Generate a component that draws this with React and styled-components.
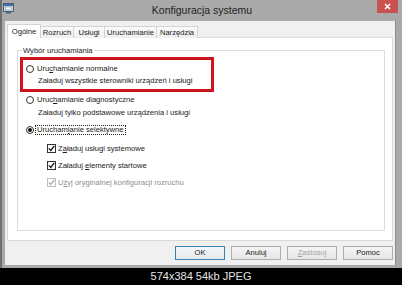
import React from "react";
import styled, { createGlobalStyle } from "styled-components";

const UI = "'Liberation Sans', Arial, sans-serif";

const Global = createGlobalStyle`
  html, body { margin: 0; padding: 0; background: #000; }
  body { font-family: ${UI}; }
  * { box-sizing: border-box; }
`;

const Page = styled.div`
  width: 402px;
  height: 285px;
  display: flex;
  flex-direction: column;
  background: #000;
  overflow: hidden;
`;

const Window = styled.div`
  height: 268px;
  flex: none;
  display: flex;
  flex-direction: column;
  background: #a9a9a9;
  border-left: 2px solid #6f6f6f;
`;

const TitleBar = styled.div`
  height: 21px;
  flex: none;
  display: grid;
  grid-template-columns: 1fr auto 1fr;
  align-items: start;
`;

const AppIcon = styled.svg`
  margin: 3px 0 0 1px;
  display: block;
`;

const TitleText = styled.div`
  font-size: 10.5px;
  line-height: 21px;
  color: #1f1f1f;
  white-space: nowrap;
`;

const CloseButton = styled.div`
  justify-self: end;
  width: 21px;
  height: 13px;
  margin-right: 4px;
  background: #c9514f;
  display: flex;
  align-items: center;
  justify-content: center;
`;

const Client = styled.div`
  flex: 1;
  margin: 0 6px 3px 3px;
  background: #f0f0f0;
  border-right: 1px solid #8c8c8c;
  display: flex;
  flex-direction: column;
  padding: 3px 2px 5px 2px;
`;

const TabRow = styled.div`
  height: 14px;
  flex: none;
  display: flex;
  align-items: flex-end;
`;

const Tab = styled.div`
  position: relative;
  z-index: ${(p) => (p.$active ? 1 : 0)};
  width: ${(p) => p.$w}px;
  height: ${(p) => (p.$active ? 14 : 12)}px;
  margin-left: ${(p) => (p.$first ? 0 : -1)}px;
  border: 1px solid #d3d3d3;
  border-bottom: none;
  background: ${(p) => (p.$active ? "#fff" : "linear-gradient(#fbfbfb, #efefef)")};
  font-size: 7.6px;
  line-height: ${(p) => (p.$active ? 13 : 11)}px;
  text-align: center;
  color: #1a1a1a;
  white-space: nowrap;
`;

const Panel = styled.div`
  flex: 1;
  margin-top: -1px;
  background: #fff;
  border: 1px solid #d9d9d9;
  display: flex;
  flex-direction: column;
  padding: 8px 7px 9px 9px;
`;

const Group = styled.fieldset`
  flex: 1;
  margin: 0;
  padding: 0;
  min-width: 0;
  border: 1px solid #dcdcdc;
`;

const GroupLabel = styled.legend`
  margin-left: 4px;
  padding: 0 1px;
  font-size: 7.6px;
  line-height: 9px;
  color: #1a1a1a;
`;

const Options = styled.div`
  display: flex;
  flex-direction: column;
  padding-left: 8px;
  font-size: 7.6px;
  color: #1a1a1a;
`;

const Highlight = styled.div`
  margin: 2px 0 0 -6px;
  width: 194px;
  border: 3px solid #d0141e;
  padding: 3px 0 2px 3px;
  display: flex;
  flex-direction: column;
`;

const Row = styled.div`
  display: flex;
  align-items: center;
  height: 12px;
  margin-top: ${(p) => p.$mt || 0}px;
  padding-left: ${(p) => p.$indent || 0}px;
  color: ${(p) => (p.$disabled ? "#8e8e8e" : "#1a1a1a")};
  white-space: nowrap;
`;

const Desc = styled.div`
  padding-left: 12px;
  height: 12px;
  line-height: 12px;
  margin-top: ${(p) => p.$mt || 0}px;
  white-space: nowrap;
`;

const RadioCircle = styled.span`
  width: 8px;
  height: 8px;
  flex: none;
  border: 1px solid #333;
  border-radius: 50%;
  background: #fff;
  margin-right: 2px;
  display: flex;
  align-items: center;
  justify-content: center;
  &::after {
    content: "";
    width: 4px;
    height: 4px;
    border-radius: 50%;
    background: ${(p) => (p.$checked ? "#111" : "transparent")};
  }
`;

const FocusLabel = styled.span`
  border: 1px dotted ${(p) => (p.$focus ? "#222" : "transparent")};
  padding: 0 1px;
  height: 10px;
  line-height: 8px;
  margin-left: -1px;
`;

const CheckBox = styled.span`
  width: 9px;
  height: 9px;
  flex: none;
  border: 1px solid ${(p) => (p.$disabled ? "#bdbdbd" : "#333")};
  background: #fff;
  margin-right: 2px;
  display: flex;
  align-items: center;
  justify-content: center;
`;

const Key = styled.span`
  text-decoration: underline;
  text-underline-offset: 1px;
`;

const ButtonRow = styled.div`
  flex: none;
  height: 14px;
  margin-top: 5px;
  display: flex;
  justify-content: flex-end;
  gap: 6px;
`;

const Button = styled.div`
  width: 50px;
  height: 14px;
  border: 1px solid ${(p) => (p.$default ? "#3c7fb1" : "#adadad")};
  background: ${(p) => (p.$default ? "linear-gradient(#f3f6f9, #e6ebf0)" : "linear-gradient(#f4f4f4, #e6e6e6)")};
  color: ${(p) => (p.$disabled ? "#a3a3a3" : "#1a1a1a")};
  font-size: 7.6px;
  line-height: 12px;
  text-align: center;
`;

const Caption = styled.div`
  flex: 1;
  color: #e4e4e4;
  font-size: 11px;
  line-height: 17px;
  text-align: center;
`;

function Radio({ checked, focus, children, mt }) {
  return (
    <Row $mt={mt}>
      <RadioCircle $checked={checked} />
      <FocusLabel $focus={focus}>{children}</FocusLabel>
    </Row>
  );
}

function Check({ disabled, children, mt }) {
  const c = disabled ? "#a8a8a8" : "#111";
  return (
    <Row $mt={mt} $indent={21} $disabled={disabled}>
      <CheckBox $disabled={disabled}>
        <svg width="7" height="7" viewBox="0 0 7 7">
          <path d="M0.8 3.4 L2.8 5.5 L6.3 0.9" fill="none" stroke={c} strokeWidth="1.3" />
        </svg>
      </CheckBox>
      <span>{children}</span>
    </Row>
  );
}

const tabs = [
  { label: "Ogólne", w: 34, active: true },
  { label: "Rozruch", w: 34 },
  { label: "Usługi", w: 32 },
  { label: "Uruchamianie", w: 53 },
  { label: "Narzędzia", w: 42 },
];

export default function App() {
  return (
    <Page>
      <Global />
      <Window>
        <TitleBar>
          <AppIcon width="11" height="11" viewBox="0 0 11 11">
            <rect x="0.5" y="0.5" width="10" height="8" fill="#d5dde6" stroke="#4a5f7a" />
            <rect x="1" y="1" width="9" height="2" fill="#3d6fa8" />
            <rect x="2.5" y="4" width="6" height="3" fill="#f4f6f8" stroke="#7d8ea3" strokeWidth="0.6" />
            <rect x="3" y="9" width="5" height="1.6" fill="#5d6e83" />
          </AppIcon>
          <TitleText>Konfiguracja systemu</TitleText>
          <CloseButton>
            <svg width="7" height="7" viewBox="0 0 7 7">
              <path d="M1 1 L6 6 M6 1 L1 6" stroke="#fff" strokeWidth="1.5" />
            </svg>
          </CloseButton>
        </TitleBar>
        <Client>
          <TabRow>
            {tabs.map((t, i) => (
              <Tab key={t.label} $w={t.w} $active={t.active} $first={i === 0}>
                {t.label}
              </Tab>
            ))}
          </TabRow>
          <Panel>
            <Group>
              <GroupLabel>Wybór uruchamiania</GroupLabel>
              <Options>
                <Highlight>
                  <Radio>
                    Uru<Key>c</Key>hamianie normalne
                  </Radio>
                  <Desc>Załaduj wszystkie sterowniki urządzeń i usługi</Desc>
                </Highlight>
                <Radio mt={2}>
                  Uruc<Key>h</Key>amianie diagnostyczne
                </Radio>
                <Desc $mt={1}>Załaduj tylko podstawowe urządzenia i usługi</Desc>
                <Radio mt={5} checked focus>
                  Urucham<Key>i</Key>anie selektywne
                </Radio>
                <Check mt={6}>
                  Z<Key>a</Key>ładuj usługi systemowe
                </Check>
                <Check mt={5}>
                  Załaduj <Key>e</Key>lementy startowe
                </Check>
                <Check mt={5} disabled>
                  U<Key>ż</Key>yj oryginalnej konfiguracji rozruchu
                </Check>
              </Options>
            </Group>
          </Panel>
          <ButtonRow>
            <Button $default>OK</Button>
            <Button>Anuluj</Button>
            <Button $disabled>
              <Key>Z</Key>astosuj
            </Button>
            <Button>Pomoc</Button>
          </ButtonRow>
        </Client>
      </Window>
      <Caption>574x384 54kb JPEG</Caption>
    </Page>
  );
}
